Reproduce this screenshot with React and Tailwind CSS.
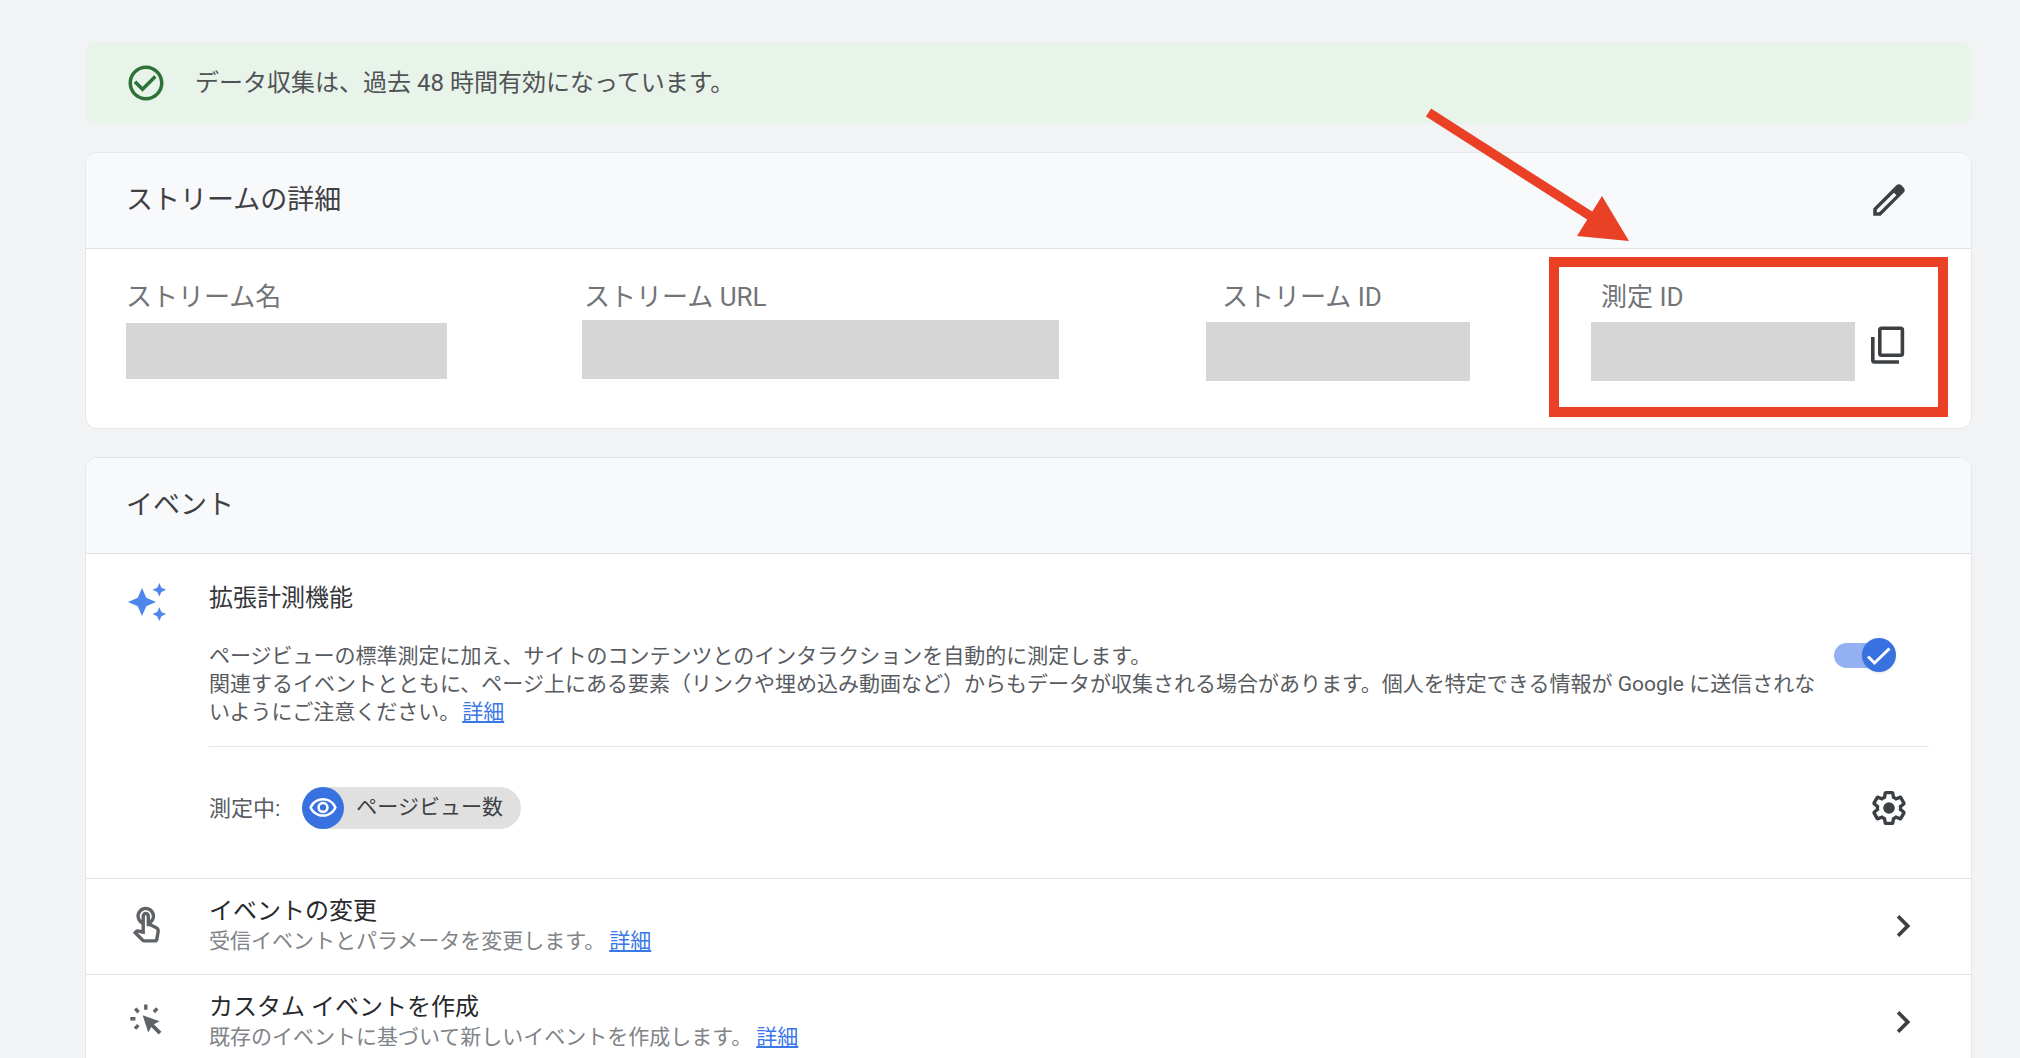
import { useState } from 'react';
import { MdCheckCircleOutline, MdChevronRight, MdOutlineTouchApp, MdOutlineVisibility } from 'react-icons/md';

const FIELDS = [
  { label: 'ストリーム名', labelPad: 'pl-0', box: 'mt-[1px] h-14 w-[321px]' },
  { label: 'ストリーム URL', labelPad: 'pl-0.5', box: '-mt-0.5 h-[59px] w-[477px]' },
  { label: 'ストリーム ID', labelPad: 'pl-4', box: 'h-[59px] w-[264px]' },
  { label: '測定 ID', labelPad: 'pl-2.5', box: 'h-[59px] w-[264px]', copy: true },
];

const ROWS = [
  {
    icon: MdOutlineTouchApp,
    title: 'イベントの変更',
    text: '受信イベントとパラメータを変更します。',
  },
  {
    icon: CursorIcon,
    title: 'カスタム イベントを作成',
    text: '既存のイベントに基づいて新しいイベントを作成します。',
  },
];

function PencilIcon() {
  return (
    <svg viewBox="0 0 24 24" className="size-[42px]" fill="currentColor">
      <path d="M20.41 4.94l-1.35-1.35c-.78-.78-2.05-.78-2.83 0L3 16.82V21h4.18L20.41 7.77c.79-.78.79-2.05 0-2.83zM6.41 19.06L5 19v-1.36l9.82-9.82 1.41 1.41-9.82 9.83z" />
    </svg>
  );
}

function CopyIcon() {
  return (
    <svg viewBox="0 0 42 42" className="size-[42px]" fill="none" stroke="currentColor" strokeWidth="3.6">
      <rect x="12.8" y="6.3" width="22.6" height="27" rx="1.8" />
      <path d="M5.8 15v23.2q0 1.8 1.8 1.8H32" />
    </svg>
  );
}

function GearIcon() {
  return (
    <svg viewBox="0 0 24 24" className="size-10" fill="currentColor">
      <path d="M13.85 22.25h-3.7c-.74 0-1.36-.54-1.45-1.27l-.27-1.89c-.27-.14-.53-.29-.79-.46l-1.8.72c-.7.26-1.47-.03-1.81-.65L2.2 15.53c-.35-.66-.2-1.44.36-1.88l1.53-1.19c-.01-.15-.02-.3-.02-.46 0-.15.01-.31.02-.46l-1.52-1.19c-.59-.45-.74-1.26-.37-1.88l1.85-3.19c.34-.62 1.11-.9 1.79-.63l1.81.73c.26-.17.52-.32.78-.46l.27-1.91c.09-.7.71-1.25 1.44-1.25h3.7c.74 0 1.36.54 1.45 1.27l.27 1.89c.27.14.53.29.79.46l1.8-.72c.71-.26 1.48.03 1.82.65l1.84 3.18c.36.66.2 1.44-.36 1.88l-1.52 1.19c.01.15.02.3.02.46s-.01.31-.02.46l1.52 1.19c.56.45.72 1.23.37 1.86l-1.86 3.22c-.34.62-1.11.9-1.8.63l-1.8-.72c-.26.17-.52.32-.78.46l-.27 1.91c-.1.68-.72 1.22-1.46 1.22zm-3.23-2h2.76l.37-2.55.53-.22c.44-.18.88-.44 1.34-.78l.45-.34 2.38.96 1.38-2.4-2.03-1.58.07-.56c.03-.26.06-.51.06-.78s-.03-.53-.06-.78l-.07-.56 2.03-1.58-1.39-2.4-2.39.96-.45-.35c-.42-.32-.87-.58-1.33-.77l-.52-.22-.37-2.55h-2.76l-.37 2.55-.53.21c-.44.19-.88.44-1.34.79l-.45.33-2.38-.95-1.39 2.39 2.03 1.58-.07.56a7 7 0 0 0-.06.79c0 .26.02.53.06.78l.07.56-2.03 1.58 1.38 2.4 2.39-.96.45.35c.43.33.86.58 1.33.77l.53.22.38 2.55z" />
      <circle cx="12" cy="12" r="3.5" />
    </svg>
  );
}

function SparkleIcon() {
  return (
    <svg viewBox="0 0 42 42" className="size-[42px] text-[#4f86ec]" fill="currentColor">
      <path d="M16 6l4.300 9.700 9.700 4.300-9.700 4.300L16 34l-4.300-9.700L2 20l9.700-4.300z" />
      <path d="M33.300 1l2.100 4.700 4.700 2.100-4.700 2.100-2.100 4.700-2.100-4.700-4.700-2.100 4.700-2.100z" />
      <path d="M33.300 25.300l2.100 4.700 4.700 2.100-4.700 2.100-2.100 4.700-2.100-4.700-4.700-2.100 4.700-2.100z" />
    </svg>
  );
}

function CursorIcon({ className }) {
  return (
    <svg viewBox="-3 -3 40 40" className={className} fill="currentColor">
      <path d="M13.300 11l16.500 5.800-5.600 2.900 7.400 7.300-2.700 2.700-7.300-7.300-2.900 5.400z" />
      <path
        d="M16.300 .5v5M6 4.500l3.300 3.500M27.500 4.200L24.200 7.700M1.200 14.300h5M9 20.500L5.800 24"
        fill="none"
        stroke="currentColor"
        strokeWidth="3.300"
      />
    </svg>
  );
}

function Callout() {
  return (
    <>
      <div className="pointer-events-none absolute -top-6 -right-[19px] -bottom-9 -left-[42px] border-10 border-[#ea4025]" />
      <svg viewBox="0 0 212 136" className="pointer-events-none absolute -top-[173px] -left-[171px] h-[136px] w-[212px]">
        <path d="M8.500 4.500L172 109" stroke="#ea4025" strokeWidth="9.500" />
        <path d="M182 88l27 45-52-5z" fill="#ea4025" />
      </svg>
    </>
  );
}

function CardHeader({ title, children }) {
  return (
    <div className="flex h-24 items-center justify-between rounded-t-xl border-b border-[#dfe1e5] bg-[#f8f9fb] pr-[61px] pb-0.5 pl-10">
      <h2 className="text-[27px] leading-8 text-[#3f4043]">{title}</h2>
      {children}
    </div>
  );
}

function DetailLink({ className }) {
  return (
    <a href="#details" className={`text-[#3b78e7] underline underline-offset-2 ${className}`}>
      詳細
    </a>
  );
}

function Toggle({ checked, onChange }) {
  return (
    <label className="relative flex h-[34px] w-[62px] shrink-0 items-center">
      <input
        type="checkbox"
        aria-label="拡張計測機能"
        checked={checked}
        onChange={(e) => onChange(e.target.checked)}
        className="h-[25px] w-14 appearance-none rounded-full bg-gray-300 checked:bg-[#93b1f3]"
      />
      <span
        className={`pointer-events-none absolute top-0 flex size-[34px] items-center justify-center rounded-full shadow ${
          checked ? 'right-0 bg-[#3871e0]' : 'left-0 bg-white'
        }`}
      >
        <svg viewBox="0 0 34 34" className="size-[34px]" fill="none" stroke="#fff" strokeWidth="3">
          <path d="M6 18.500l6.500 6.500L27.500 10.500" />
        </svg>
      </span>
    </label>
  );
}

export default function App() {
  const [enhanced, setEnhanced] = useState(true);

  return (
    <main
      lang="ja"
      className="flex h-screen flex-col gap-7 overflow-hidden bg-[#f1f3f4] pt-[42px] pr-12 pl-[85px] font-['Roboto','Noto_Sans_CJK_JP',sans-serif] text-[#3c4043]"
    >
      <div role="status" className="flex h-[82px] shrink-0 items-center gap-7 rounded-xl bg-[#e8f3ea] pl-10">
        <MdCheckCircleOutline className="size-[42px] text-[#2e7237]" />
        <p className="text-2xl text-[#505356]">データ収集は、過去 48 時間有効になっています。</p>
      </div>

      <section className="shrink-0 rounded-xl border border-[#e4e6e9] bg-white">
        <CardHeader title="ストリームの詳細">
          <button type="button" aria-label="編集">
            <PencilIcon />
          </button>
        </CardHeader>
        <div className="grid grid-cols-[456fr_624fr_385fr_338fr] pt-8 pr-[42px] pb-[47px] pl-10">
          {FIELDS.map((f) => (
            <div key={f.label} className="relative">
              <div className={`text-[26px] leading-8 text-[#717579] ${f.labelPad}`}>{f.label}</div>
              <div className="mt-[9px] flex items-start gap-3">
                <div className={`bg-[#d6d6d6] ${f.box}`} />
                {f.copy && (
                  <button type="button" aria-label="コピー">
                    <CopyIcon />
                  </button>
                )}
              </div>
              {f.copy && <Callout />}
            </div>
          ))}
        </div>
      </section>

      <section className="shrink-0 rounded-xl border border-[#e4e6e9] bg-white">
        <CardHeader title="イベント" />
        <div className="flex pt-7 pr-[42px] pb-[49px] pl-10">
          <div className="w-[83px] shrink-0">
            <SparkleIcon />
          </div>
          <div className="flex-1">
            <h3 className="text-2xl text-[#35373a]">拡張計測機能</h3>
            <div className="mt-7 flex items-start justify-between pr-[33px]">
              <div className="text-[21px] leading-7 text-[#585b5f]">
                <p>ページビューの標準測定に加え、サイトのコンテンツとのインタラクションを自動的に測定します。</p>
                <p>
                  関連するイベントとともに、ページ上にある要素（リンクや埋め込み動画など）からもデータが収集される場合があります。個人を特定できる情報が Google に送信されないようにご注意ください。
                  <DetailLink className="ml-0.5" />
                </p>
              </div>
              <div className="-mt-1">
                <Toggle checked={enhanced} onChange={setEnhanced} />
              </div>
            </div>
            <hr className="mt-5 border-[#e4e6e9]" />
            <div className="mt-10 flex items-center pr-5">
              <span className="text-[22px] text-[#585b5f]">測定中:</span>
              <span className="ml-[22px] flex h-[42px] items-center gap-3 rounded-full bg-[#e0e0e0] pr-[18px] text-[21px]">
                <span className="flex size-[42px] items-center justify-center rounded-full bg-[#3871e0] text-white">
                  <MdOutlineVisibility className="size-[30px]" />
                </span>
                ページビュー数
              </span>
              <button type="button" aria-label="設定" className="ml-auto">
                <GearIcon />
              </button>
            </div>
          </div>
        </div>

        {ROWS.map(({ icon: Icon, title, text }) => (
          <div key={title} className="flex h-24 items-center border-t border-[#dfe1e5] pr-[46px] pb-0.5 pl-10">
            <div className="w-[83px] shrink-0">
              <Icon className="size-[41px] text-[#5f6368]" />
            </div>
            <div className="flex-1">
              <h3 className="text-2xl leading-[30px] text-[#28292c]">{title}</h3>
              <p className="text-[21px] leading-[30px] text-[#808387]">
                {text}
                <DetailLink className="ml-1" />
              </p>
            </div>
            <button type="button" aria-label={title}>
              <MdChevronRight className="size-11" />
            </button>
          </div>
        ))}
      </section>
    </main>
  );
}
